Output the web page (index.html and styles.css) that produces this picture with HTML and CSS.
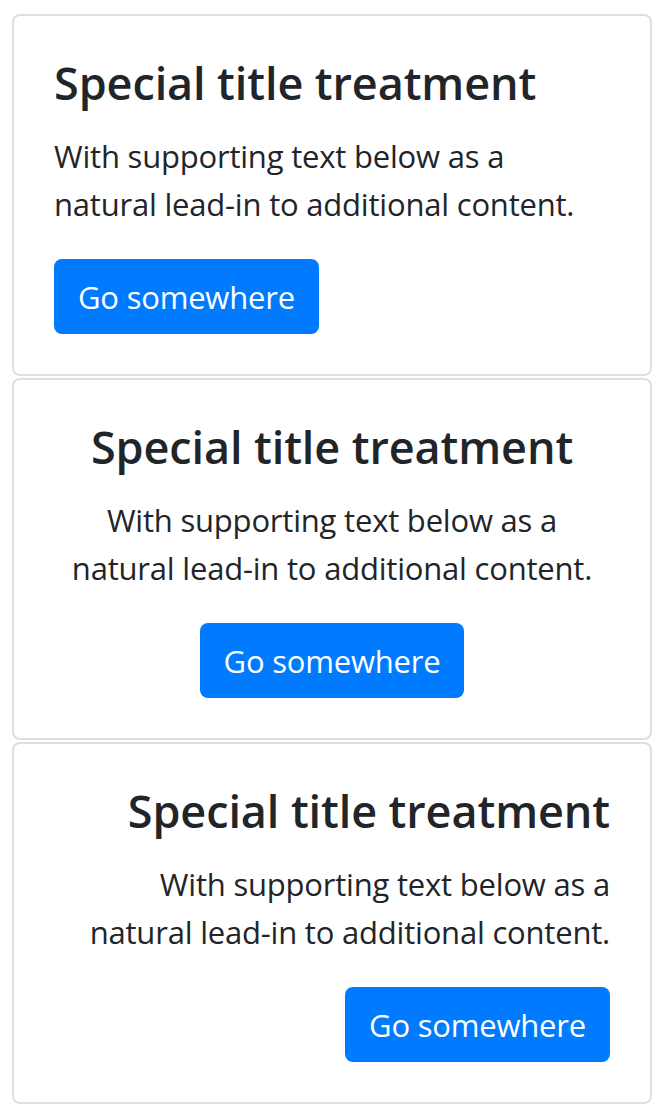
FILE: index.html
```html
<!DOCTYPE html>
<html>
<head>
<meta charset="utf-8">
<link rel="stylesheet" href="styles.css">
</head>
<body>
<div class="stack">
  <div class="card">
    <div class="card-body">
      <h5 class="card-title">Special title treatment</h5>
      <p class="card-text">With supporting text below as a natural lead-in to additional content.</p>
      <a class="btn" href="#">Go somewhere</a>
    </div>
  </div>
  <div class="card center">
    <div class="card-body">
      <h5 class="card-title">Special title treatment</h5>
      <p class="card-text">With supporting text below as a natural lead-in to additional content.</p>
      <a class="btn" href="#">Go somewhere</a>
    </div>
  </div>
  <div class="card right">
    <div class="card-body">
      <h5 class="card-title">Special title treatment</h5>
      <p class="card-text">With supporting text below as a natural lead-in to additional content.</p>
      <a class="btn" href="#">Go somewhere</a>
    </div>
  </div>
</div>
</body>
</html>
```
FILE: styles.css
```css
html, body {
  margin: 0;
  padding: 0;
  background: #fff;
}
body {
  font-family: "Open Sans", "Noto Sans", sans-serif;
  color: #212529;
}
.stack {
  width: 640px;
  margin: 14px 0 0 12px;
  display: flex;
  flex-direction: column;
  gap: 2px;
}
.card {
  border: 2px solid rgba(0, 0, 0, 0.125);
  border-radius: 8px;
  background: #fff;
}
.card-body {
  padding: 40px;
}
.center .card-body { text-align: center; }
.right .card-body { text-align: right; }
.card-title {
  margin: 0 0 23px;
  font-size: 45px;
  line-height: 53px;
  font-weight: 600;
  letter-spacing: -0.1px;
}
.card-text {
  margin: 0 0 31px;
  font-size: 31px;
  line-height: 48px;
  font-weight: 400;
  letter-spacing: -0.2px;
}
.btn {
  display: inline-block;
  box-sizing: border-box;
  height: 75px;
  padding: 1px 24px 0;
  line-height: 74px;
  font-size: 31px;
  letter-spacing: -0.2px;
  color: #fff;
  background: #007bff;
  border-radius: 8px;
  text-decoration: none;
  vertical-align: top;
}
```
